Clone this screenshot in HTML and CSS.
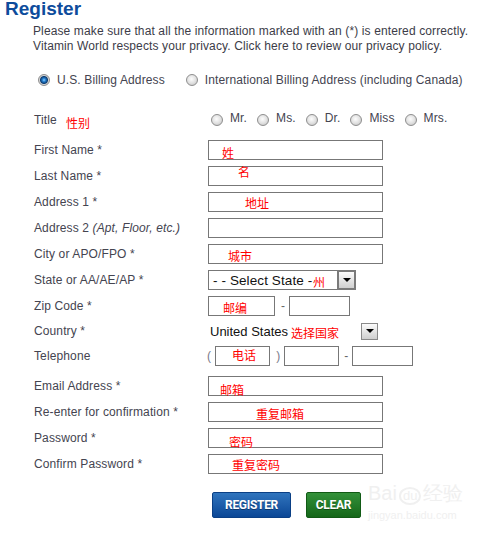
FILE: index.html
```html
<!DOCTYPE html>
<html>
<head>
  <title>Register</title>
  <link rel="stylesheet" href="styles.css">
</head>
<body>
  <div class="page">
    <h1 class="page-title">Register</h1>
    <p class="intro">
      Please make sure that all the information marked with an (*) is entered correctly.<br>
      Vitamin World respects your privacy. Click here to review our privacy policy.
    </p>

    <!-- billing address type -->
    <div class="billing">
      <label class="opt"><input type="radio" name="billing" class="radio" checked>U.S. Billing Address</label>
      <label class="opt"><input type="radio" name="billing" class="radio">International Billing Address (including Canada)</label>
    </div>

    <form class="reg-form">
      <div class="row row-title">
        <span class="label">Title</span>
        <div class="field titles">
          <label class="opt-title"><input type="radio" name="title" class="radio"><span>Mr.</span></label>
          <label class="opt-title"><input type="radio" name="title" class="radio"><span>Ms.</span></label>
          <label class="opt-title"><input type="radio" name="title" class="radio"><span>Dr.</span></label>
          <label class="opt-title"><input type="radio" name="title" class="radio"><span>Miss</span></label>
          <label class="opt-title"><input type="radio" name="title" class="radio"><span>Mrs.</span></label>
        </div>
        <span class="note n-gender">性别</span>
      </div>

      <div class="row">
        <label class="label">First Name *</label>
        <div class="field"><input type="text" class="text"></div>
        <span class="note n-first">姓</span>
      </div>

      <div class="row">
        <label class="label">Last Name *</label>
        <div class="field"><input type="text" class="text"></div>
        <span class="note n-last">名</span>
      </div>

      <div class="row">
        <label class="label">Address 1 *</label>
        <div class="field"><input type="text" class="text"></div>
        <span class="note n-addr">地址</span>
      </div>

      <div class="row">
        <label class="label">Address 2 <i>(Apt, Floor, etc.)</i></label>
        <div class="field"><input type="text" class="text"></div>
      </div>

      <div class="row">
        <label class="label">City or APO/FPO *</label>
        <div class="field"><input type="text" class="text"></div>
        <span class="note n-city">城市</span>
      </div>

      <div class="row">
        <label class="label">State or AA/AE/AP *</label>
        <div class="field">
          <div class="select">
            <span>- - Select State -</span>
            <span class="select-btn"><span class="tri"></span></span>
          </div>
        </div>
        <span class="note n-state">州</span>
      </div>

      <div class="row">
        <label class="label">Zip Code *</label>
        <div class="field">
          <input type="text" class="text zip-a">
          <span class="dash">-</span>
          <input type="text" class="text zip-b">
        </div>
        <span class="note n-zip">邮编</span>
      </div>

      <div class="row row-country">
        <label class="label">Country *</label>
        <div class="field">
          <div class="country">
            <span>United States</span>
            <span class="country-btn"><span class="tri"></span></span>
          </div>
        </div>
        <span class="note n-country">选择国家</span>
      </div>

      <div class="row row-phone">
        <label class="label">Telephone</label>
        <div class="field">
          <span class="paren open">(</span>
          <input type="text" class="text phone-a">
          <span class="paren close">)</span>
          <input type="text" class="text phone-b">
          <span class="dash phone-dash">-</span>
          <input type="text" class="text phone-c">
        </div>
        <span class="note n-phone">电话</span>
      </div>

      <div class="row">
        <label class="label">Email Address *</label>
        <div class="field"><input type="text" class="text"></div>
        <span class="note n-email">邮箱</span>
      </div>

      <div class="row">
        <label class="label">Re-enter for confirmation *</label>
        <div class="field"><input type="text" class="text"></div>
        <span class="note n-email2">重复邮箱</span>
      </div>

      <div class="row">
        <label class="label">Password *</label>
        <div class="field"><input type="password" class="text"></div>
        <span class="note n-pass">密码</span>
      </div>

      <div class="row">
        <label class="label">Confirm Password *</label>
        <div class="field"><input type="password" class="text"></div>
        <span class="note n-pass2">重复密码</span>
      </div>

      <div class="actions">
        <button type="submit" class="btn btn-register">REGISTER</button>
        <button type="reset" class="btn btn-clear">CLEAR</button>
      </div>
    </form>

    <!-- faint site watermark -->
    <div class="watermark">
      <div class="wm-main">Bai<span class="wm-du">du</span>经验</div>
      <div class="wm-sub">jingyan.baidu.com</div>
    </div>
  </div>
</body>
</html>
```

FILE: styles.css
```css
body {
  margin: 0;
  background-color: #fff;
  font-family: "Liberation Sans", Arial, sans-serif;
  font-size: 12px;
  letter-spacing: 0.12px;
  color: #444450;
}

.page {
  position: relative;
  width: 485px;
  height: 534px;
}

.page-title {
  margin: 0;
  padding-left: 5px;
  font-size: 19px;
  line-height: 17px;
  font-weight: bold;
  letter-spacing: 0;
  color: #0d4c9c;
}

.intro {
  margin: 7px 0 0;
  padding-left: 33px;
  line-height: 15px;
  color: #3c3c48;
}

/* radios */
.radio {
  appearance: none;
  -webkit-appearance: none;
  flex: none;
  width: 12px;
  height: 12px;
  margin: 0;
  border: 1px solid #8e8e8e;
  border-radius: 50%;
  background: radial-gradient(circle at 45% 40%, #fdfdfd 0, #e2e2e2 50%, #bdbdbd 100%);
}

.radio:checked {
  background: radial-gradient(circle, #9ad4ff 0, #2a86d6 1.5px, #0b3c72 3.5px, #d6d6d6 4.5px, #bcbcbc 100%);
}

.billing {
  display: flex;
  align-items: center;
  height: 14px;
  margin-top: 19px;
  padding-left: 38px;
}

.billing .opt {
  display: flex;
  align-items: center;
  gap: 7px;
  margin-right: 21px;
}

/* form rows */
.reg-form {
  margin-top: 23px;
  padding-left: 34px;
}

.row {
  position: relative;
  display: flex;
  align-items: center;
  height: 20px;
  margin-bottom: 6px;
}

.row-title {
  margin-bottom: 10px;
}

.row-country {
  height: 18px;
}

.row-phone {
  margin-bottom: 10px;
}

.label {
  flex: none;
  width: 174px;
  margin-top: -1px;
}

.field {
  display: flex;
  align-items: center;
  height: 100%;
}

.text {
  box-sizing: border-box;
  width: 175px;
  height: 20px;
  margin: 0;
  padding: 0 3px;
  border: 1px solid #777;
  font: inherit;
}

.titles {
  padding-left: 3px;
}

.opt-title {
  display: flex;
  align-items: center;
  gap: 7px;
  margin-right: 10px;
}

.opt-title span {
  position: relative;
  top: -2px;
}

/* state select */
.select {
  box-sizing: border-box;
  display: flex;
  align-items: center;
  justify-content: space-between;
  width: 148px;
  height: 20px;
  padding-left: 4px;
  border: 1px solid #777;
  font-size: 13.5px;
  letter-spacing: 0.1px;
  color: #111;
}

.select-btn {
  box-sizing: border-box;
  display: flex;
  align-items: center;
  justify-content: center;
  width: 19px;
  height: 20px;
  margin-right: -1px;
  border: 2px solid #7a7a7a;
  background: linear-gradient(#fbfbfb, #cfcfcf);
}

.tri {
  width: 0;
  height: 0;
  border-left: 4px solid transparent;
  border-right: 4px solid transparent;
  border-top: 4px solid #000;
}

.zip-a {
  width: 67px;
}

.zip-b {
  width: 61px;
}

.dash {
  margin: 0 4px 0 6px;
  color: #666;
}

.country {
  display: flex;
  align-items: center;
  justify-content: space-between;
  width: 168px;
  padding-left: 2px;
  font-size: 13px;
  letter-spacing: 0;
  color: #111;
}

.country-btn {
  box-sizing: border-box;
  display: flex;
  align-items: center;
  justify-content: center;
  width: 17px;
  height: 17px;
  border: 1px solid #8a8a8a;
  background: linear-gradient(#fbfbfb, #cfcfcf);
}

.paren {
  color: #7a7a8a;
}

.paren.open {
  margin: 0 4px 0 -1px;
}

.paren.close {
  margin: 0 4px 0 6px;
}

.phone-a,
.phone-b {
  width: 55px;
}

.phone-c {
  width: 61px;
}

.phone-dash {
  margin-left: 5px;
}

/* red hand notes over the form */
.note {
  position: absolute;
  font-family: "Noto Sans CJK SC", sans-serif;
  font-size: 12px;
  line-height: 12px;
  letter-spacing: 0;
  color: #f00;
  white-space: nowrap;
}

.n-gender { left: 32px; top: 7px; }
.n-first { left: 188px; top: 7px; }
.n-last { left: 204px; top: 0; }
.n-addr { left: 211px; top: 5px; }
.n-city { left: 194px; top: 6px; }
.n-state { left: 279px; top: 6px; }
.n-zip { left: 189px; top: 6px; }
.n-country { left: 257px; top: 5px; }
.n-phone { left: 198px; top: 3px; }
.n-email { left: 186px; top: 8px; }
.n-email2 { left: 222px; top: 6px; }
.n-pass { left: 195px; top: 8px; }
.n-pass2 { left: 198px; top: 5px; }

/* buttons */
.actions {
  display: flex;
  gap: 15px;
  margin-top: 18px;
  padding-left: 178px;
}

.btn {
  box-sizing: border-box;
  display: flex;
  align-items: center;
  justify-content: center;
  height: 26px;
  padding: 0;
  border: 1px solid;
  border-radius: 2px;
  font-family: Roboto, sans-serif;
  font-weight: bold;
  font-size: 12px;
  letter-spacing: -0.3px;
  color: #fff;
  text-shadow: 0 1px 0 rgba(0, 0, 0, 0.35);
  cursor: pointer;
}

.btn-register {
  width: 79px;
  background: linear-gradient(#3074bd, #0b4796);
  border-color: #0a3f85;
}

.btn-clear {
  width: 55px;
  background: linear-gradient(#33913a, #156719);
  border-color: #115a15;
}

.watermark {
  position: absolute;
  left: 368px;
  top: 482px;
  color: #f0f0f0;
  font-family: "Liberation Sans", sans-serif;
  letter-spacing: 0;
}

.wm-main {
  font-size: 20px;
  line-height: 22px;
}

.wm-du {
  display: inline-block;
  margin: 0 2px;
  padding: 0 2px;
  border: 2px solid #f0f0f0;
  border-radius: 50%;
  font-size: 13px;
  line-height: 14px;
}

.wm-sub {
  margin-top: 4px;
  font-size: 11px;
  line-height: 13px;
}
```
